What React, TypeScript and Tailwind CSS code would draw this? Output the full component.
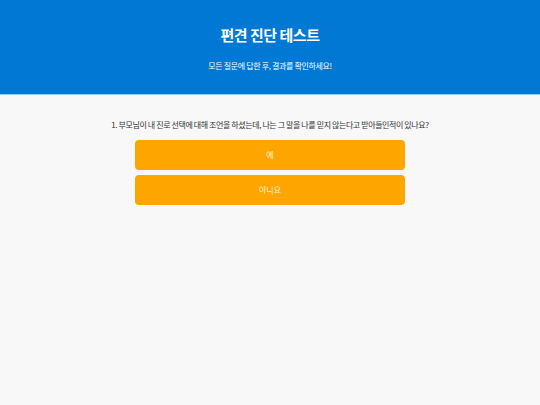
export default function App() {
  return (
    <div className="min-h-[405px] bg-[#f8f8f8] font-['Noto_Sans_CJK_KR','Noto_Sans',sans-serif]">
      <header className="flex h-[95px] flex-col items-center border-b border-[#8fd0f5] bg-[#0078d4] text-white">
        <h1 className="mt-[24px] text-[15px] font-bold leading-[22px] tracking-[-0.5px]">편견 진단 테스트</h1>
        <p className="mt-[14px] text-[8px] leading-[12px] tracking-[-0.35px]">모든 질문에 답한 후, 결과를 확인하세요!</p>
      </header>
      <main className="flex flex-col items-center">
        <p className="mt-[24px] text-[8px] leading-[12px] tracking-[-0.4px] text-[#333]">
          1. 부모님이 내 진로 선택에 대해 조언을 하셨는데, 나는 그 말을 나를 믿지 않는다고 받아들인적이 있나요?
        </p>
        <div className="mt-[9px] flex w-[270px] flex-col gap-[5px]">
          <button className="h-[30px] rounded-[4px] bg-[#ffa500] text-[8px] text-[#fff3dc]">예</button>
          <button className="h-[30px] rounded-[4px] bg-[#ffa500] text-[8px] text-[#fff3dc]">아니요</button>
        </div>
      </main>
    </div>
  );
}
